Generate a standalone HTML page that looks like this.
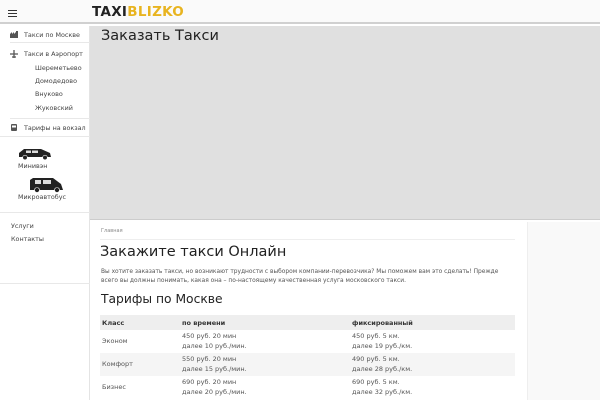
<!DOCTYPE html>
<html><head><meta charset="utf-8"><style>
*{margin:0;padding:0;box-sizing:border-box}
body{width:600px;height:400px;overflow:hidden;background:#fff;font-family:"DejaVu Sans","Liberation Sans",sans-serif;position:relative;color:#333}
.hdr{position:absolute;left:0;top:0;width:600px;height:24px;background:#fafafa;border-bottom:2px solid #d0d0d0}
.burger{position:absolute;left:8px;top:10px;width:9px;height:7px;border-top:1.5px solid #333;border-bottom:1.5px solid #333}
.burger:after{content:"";position:absolute;left:0;top:1.5px;width:9px;height:1.5px;background:#333}
.logo{position:absolute;left:92px;top:4px;font-family:"DejaVu Sans",sans-serif;font-weight:bold;font-size:13.5px;letter-spacing:0.3px;color:#222}
.logo span{color:#e8b420}
.side{position:absolute;left:0;top:26px;width:90px;height:374px;background:#fff;border-right:1px solid #e4e4e4}
.it{position:absolute;font-size:6.4px;color:#444;white-space:nowrap}
.hr{position:absolute;left:10px;width:80px;height:1px;background:#e8e8e8}
.grey{position:absolute;left:90px;top:26px;width:510px;height:194px;background:#e0e0e0;border-bottom:1px solid #ccc}
.h1{position:absolute;left:101px;top:28px;font-size:14.5px;color:#222}
.right{position:absolute;left:527px;top:222px;width:73px;height:178px;background:#f9f9f9;border-left:1px solid #eee}
.c{position:absolute;font-size:7px;color:#555}
table{position:absolute;left:100px;top:315px;width:415px;border-collapse:collapse;font-size:6.5px;color:#555}
td{padding:0 2px 0 2px;vertical-align:middle;line-height:9.5px}
th{text-align:left;font-weight:bold;color:#333;padding:0 2px;height:15px}
</style></head><body>
<div class="hdr"><div class="burger"></div><div class="logo">TAXI<span>BLIZKO</span></div></div>
<div class="side">
<svg style="position:absolute;left:10px;top:5px" width="8" height="7"><path d="M0 7V3L2 1V3L4 1V3L6 1V0H8V7Z" fill="#555"/></svg>
<div class="it" style="left:24px;top:5px">Такси по Москве</div>
<div class="hr" style="top:16px"></div>
<svg style="position:absolute;left:10px;top:24px" width="8" height="8"><path d="M4 0V8M0 4H8M2 7H6" stroke="#555" stroke-width="1.3"/></svg>
<div class="it" style="left:24px;top:24px">Такси в Аэропорт</div>
<div class="it" style="left:35px;top:38px">Шереметьево</div>
<div class="it" style="left:35px;top:51px">Домодедово</div>
<div class="it" style="left:35px;top:64px">Внуково</div>
<div class="it" style="left:35px;top:78px">Жуковский</div>
<div class="hr" style="top:92px"></div>
<svg style="position:absolute;left:11px;top:98px" width="6" height="8"><rect x="0" y="0" width="6" height="7" rx="1" fill="#555"/><rect x="1" y="1.5" width="4" height="2" fill="#fff"/></svg>
<div class="it" style="left:24px;top:98px">Тарифы на вокзал</div>
<div class="hr" style="top:110px;left:0;width:90px"></div>
<svg style="position:absolute;left:18px;top:122px" width="34" height="12"><path d="M1 9V5L6 1H23L32 5L33 9Z" fill="#222"/><rect x="8" y="2.5" width="5" height="2.5" fill="#ddd"/><rect x="14" y="2.5" width="6" height="2.5" fill="#ddd"/><circle cx="7" cy="9.5" r="2.3" fill="#222" stroke="#fff" stroke-width=".6"/><circle cx="27" cy="9.5" r="2.3" fill="#222" stroke="#fff" stroke-width=".6"/></svg>
<div class="it" style="left:18px;top:136px">Минивэн</div>
<svg style="position:absolute;left:29px;top:151px" width="35" height="16"><path d="M1 13V3L4 1H24L32 7L34 13Z" fill="#222"/><rect x="6" y="3" width="6" height="4" fill="#ddd"/><rect x="14" y="3" width="8" height="4" fill="#ddd"/><circle cx="8" cy="13" r="2.5" fill="#222" stroke="#fff" stroke-width=".6"/><circle cx="28" cy="13" r="2.5" fill="#222" stroke="#fff" stroke-width=".6"/></svg>
<div class="it" style="left:18px;top:167px">Микроавтобус</div>
<div class="hr" style="top:186px;left:0;width:90px"></div>
<div class="it" style="left:11px;top:196px">Услуги</div>
<div class="it" style="left:11px;top:209px">Контакты</div>
<div class="hr" style="top:257px;left:0;width:90px"></div>
</div>
<div class="grey"></div>
<div class="h1">Заказать Такси</div>
<div class="right"></div>
<div class="c" style="left:101px;top:228px;font-size:5px;color:#888">Главная</div>
<div style="position:absolute;left:100px;top:239px;width:415px;height:1px;background:#eee"></div>
<div style="position:absolute;left:100px;top:244px;font-size:14.5px;color:#222">Закажите такси Онлайн</div>
<div class="c" style="left:101px;top:268px;font-size:5.9px;line-height:9px;width:405px">Вы хотите заказать такси, но возникают трудности с выбором компании-перевозчика? Мы поможем вам это сделать! Прежде<br>всего вы должны понимать, какая она – по-настоящему качественная услуга московского такси.</div>
<div style="position:absolute;left:101px;top:292px;font-size:12.3px;color:#222">Тарифы по Москве</div>
<table>
<tr style="background:#eee"><th style="width:80px">Класс</th><th style="width:170px">по времени</th><th>фиксированный</th></tr>
<tr style="height:23px"><td>Эконом</td><td>450 руб. 20 мин<br>далее 10 руб./мин.</td><td>450 руб. 5 км.<br>далее 19 руб./км.</td></tr>
<tr style="height:23px;background:#f5f5f5"><td>Комфорт</td><td>550 руб. 20 мин<br>далее 15 руб./мин.</td><td>490 руб. 5 км.<br>далее 28 руб./км.</td></tr>
<tr style="height:23px"><td>Бизнес</td><td>690 руб. 20 мин<br>далее 20 руб./мин.</td><td>690 руб. 5 км.<br>далее 32 руб./км.</td></tr>
</table>
</body></html>
